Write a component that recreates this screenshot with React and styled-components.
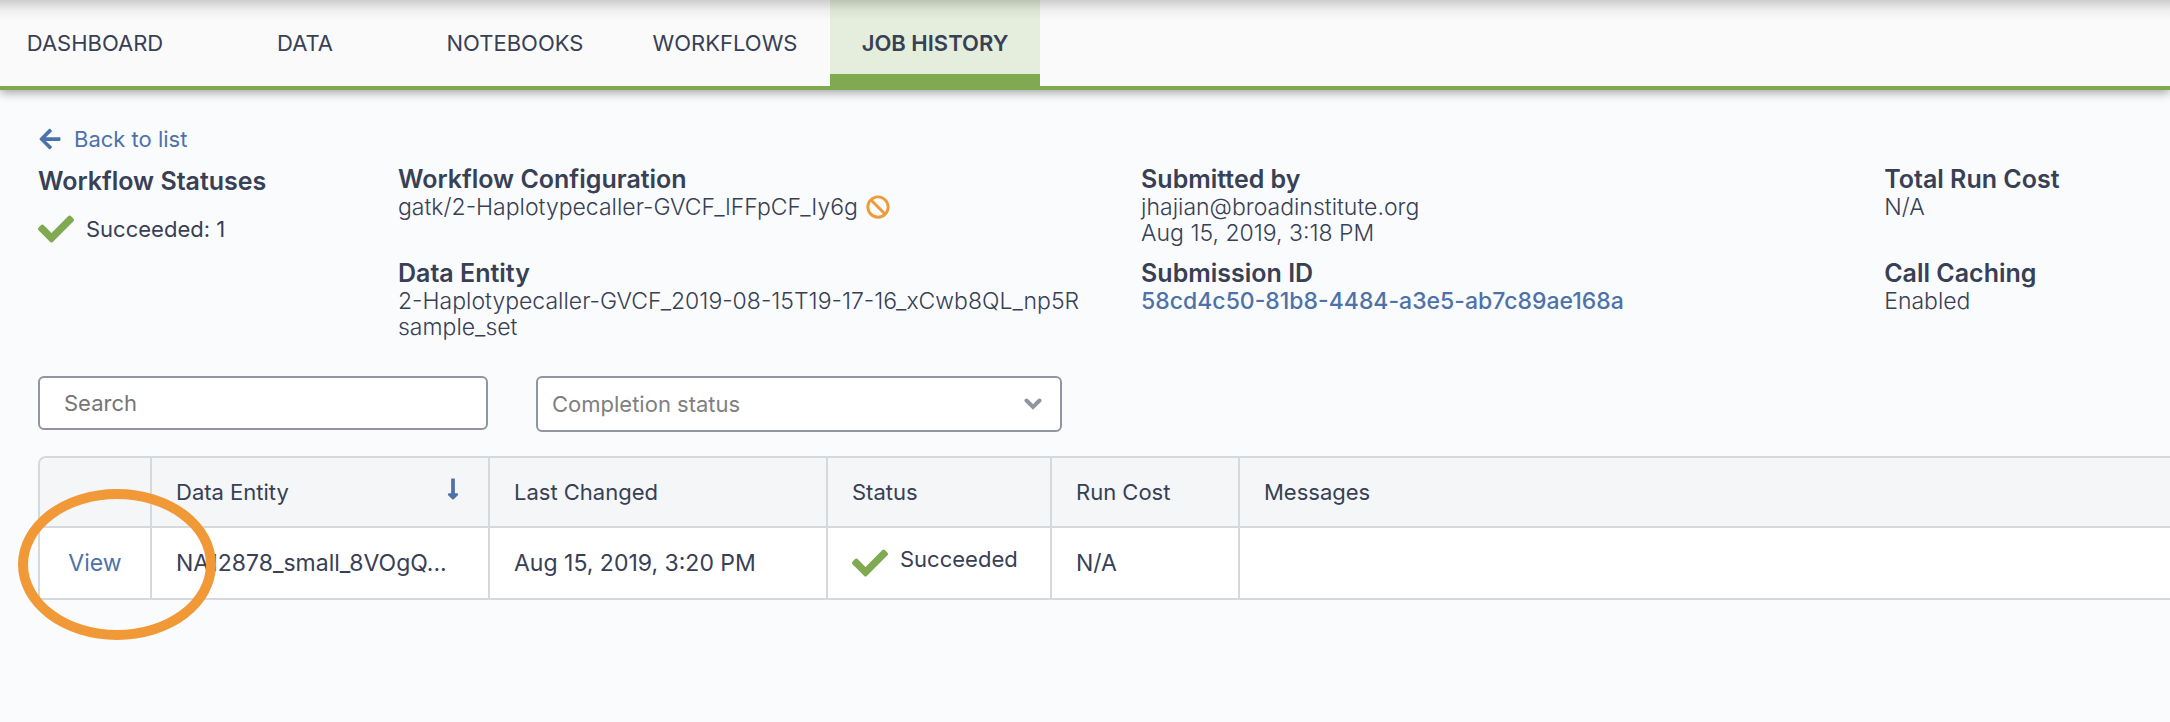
import React from "react";
import styled, { createGlobalStyle } from "styled-components";
import { FaArrowLeft, FaBan, FaCheck, FaLongArrowAltDown } from "react-icons/fa";

const tabs = ["Dashboard", "Data", "Notebooks", "Workflows", "Job History"];

const columns = [
  { label: "", width: 112 },
  { label: "Data Entity", width: 338, sorted: true },
  { label: "Last Changed", width: 338 },
  { label: "Status", width: 224 },
  { label: "Run Cost", width: 188 },
  { label: "Messages" },
];

const workflows = [
  {
    entity: "NA12878_small_8VOgQ...",
    changed: "Aug 15, 2019, 3:20 PM",
    status: "Succeeded",
    cost: "N/A",
    messages: "",
  },
];

const App = () => {
  return (
    <Page>
      <GlobalStyle />
      <TabBar>
        {tabs.map((tab) => (
          <Tab href="#" key={tab} $active={tab === "Job History"}>
            {tab}
          </Tab>
        ))}
      </TabBar>
      <Content>
        <BackLink href="#">
          <FaArrowLeft size={24} />
          Back to list
        </BackLink>
        <Details>
          <Statuses>
            <Heading>Workflow Statuses</Heading>
            <StatusLine>
              <CheckIcon />
              Succeeded: 1
            </StatusLine>
          </Statuses>
          <Section>
            <Heading>Workflow Configuration</Heading>
            <Value>
              gatk/2-Haplotypecaller-GVCF_lFFpCF_Iy6g
              <BanIcon />
            </Value>
          </Section>
          <Section>
            <Heading>Submitted by</Heading>
            <Value>jhajian@broadinstitute.org</Value>
            <Value>Aug 15, 2019, 3:18 PM</Value>
          </Section>
          <Section>
            <Heading>Total Run Cost</Heading>
            <Value>N/A</Value>
          </Section>
          <Section>
            <Heading>Data Entity</Heading>
            <Value>2-Haplotypecaller-GVCF_2019-08-15T19-17-16_xCwb8QL_np5R</Value>
            <Value>sample_set</Value>
          </Section>
          <Section>
            <Heading>Submission ID</Heading>
            <IdLink href="#">58cd4c50-81b8-4484-a3e5-ab7c89ae168a</IdLink>
          </Section>
          <Section>
            <Heading>Call Caching</Heading>
            <Value>Enabled</Value>
          </Section>
        </Details>
        <Filters>
          <SearchInput type="search" placeholder="Search" aria-label="Search" />
          <SelectBox>
            <StatusSelect aria-label="Completion status" defaultValue="">
              <option value="">Completion status</option>
              <option value="succeeded">Succeeded</option>
              <option value="failed">Failed</option>
            </StatusSelect>
            <Chevron viewBox="0 0 18 12" aria-hidden="true">
              <path d="M2.500 2.500 9 9l6.500-6.500" />
            </Chevron>
          </SelectBox>
        </Filters>
        <TableArea>
          <Table>
            <colgroup>
              {columns.map((col) => (
                <Col key={col.label} $width={col.width} />
              ))}
            </colgroup>
            <thead>
              <tr>
                {columns.map((col) => (
                  <HeadCell key={col.label}>
                    <HeadLabel>
                      {col.label}
                      {col.sorted && <SortIcon />}
                    </HeadLabel>
                  </HeadCell>
                ))}
              </tr>
            </thead>
            <tbody>
              {workflows.map((row) => (
                <tr key={row.entity}>
                  <ActionCell>
                    <ViewLink href="#">View</ViewLink>
                  </ActionCell>
                  <Cell>{row.entity}</Cell>
                  <Cell>{row.changed}</Cell>
                  <Cell>
                    <CellStatus>
                      <CheckIcon />
                      <span>{row.status}</span>
                    </CellStatus>
                  </Cell>
                  <Cell>{row.cost}</Cell>
                  <Cell>{row.messages}</Cell>
                </tr>
              ))}
            </tbody>
          </Table>
          <Highlight />
        </TableArea>
      </Content>
    </Page>
  );
};
export default App;

const GlobalStyle = createGlobalStyle`
  * {
    box-sizing: border-box;
  }
  body {
    margin: 0;
    background: #fafbfd;
    color: #374055;
    font-family: Inter, sans-serif;
    font-size: 22px;
    line-height: 26px;
  }
`;

const Page = styled.div`
  min-height: 100vh;
  overflow: hidden;
`;

const TabBar = styled.nav`
  display: flex;
  position: relative;
  height: 90px;
  background: #fafafa;
  border-bottom: 4px solid #80aa51;
  box-shadow: 0 2px 10px rgba(0, 0, 0, 0.4);

  /* shadow cast by the top bar */
  &::before {
    content: "";
    position: absolute;
    inset: 0 0 auto;
    height: 20px;
    background: linear-gradient(rgba(0, 0, 0, 0.18), rgba(0, 0, 0, 0.05) 50%, transparent);
  }
`;

const Tab = styled.a`
  display: flex;
  align-items: center;
  justify-content: center;
  width: 210px;
  padding-top: 12px;
  background: ${(props) => (props.$active ? "#e5eedc" : "none")};
  border-bottom: 12px solid ${(props) => (props.$active ? "#80aa51" : "transparent")};
  color: #374055;
  font-weight: ${(props) => (props.$active ? 600 : 400)};
  text-decoration: none;
  text-transform: uppercase;

  &:first-child {
    margin-left: -10px;
  }
`;

const Content = styled.main`
  padding: 36px 0 0 38px;
`;

const BackLink = styled.a`
  display: flex;
  align-items: center;
  gap: 12px;
  width: fit-content;
  color: #4d72aa;
  text-decoration: none;
`;

const Details = styled.div`
  display: grid;
  grid-template-columns: 360px 13fr 13fr 5fr;
  row-gap: 12px;
  margin-top: 12px;
`;

const Statuses = styled.section`
  grid-row: span 2;
  padding-top: 2px;
`;

const Section = styled.section`
  min-width: 0;
  min-height: 82px;
`;

const Heading = styled.h2`
  margin: 0;
  font-size: 25px;
  line-height: 30px;
  font-weight: 600;
`;

const StatusLine = styled.div`
  display: flex;
  align-items: center;
  gap: 12px;
  margin-top: 20px;
`;

const CheckIcon = styled(FaCheck)`
  flex: none;
  width: 36px;
  height: 36px;
  margin: -5px 0;
  color: #80aa51;
`;

const Value = styled.div`
  display: flex;
  align-items: center;
  font-size: 23px;
  font-weight: 300;
`;

const BanIcon = styled(FaBan)`
  width: 24px;
  height: 24px;
  margin-left: 8px;
  color: #ed9b3b;
`;

const IdLink = styled.a`
  color: #4d72aa;
  font-size: 23px;
  font-weight: 500;
  text-decoration: none;
`;

const Filters = styled.div`
  display: flex;
  align-items: flex-start;
  gap: 48px;
  margin-top: 36px;
`;

const SearchInput = styled.input`
  width: 450px;
  height: 54px;
  padding: 0 24px;
  background: #fff;
  border: 2px solid #8f95a3;
  border-radius: 6px;
  font: inherit;

  &::placeholder {
    color: #757575;
  }
`;

const SelectBox = styled.div`
  position: relative;
  width: 526px;
`;

const StatusSelect = styled.select`
  appearance: none;
  display: block;
  width: 100%;
  height: 56px;
  padding: 0 48px 0 14px;
  background: #fff;
  border: 2px solid #8f95a3;
  border-radius: 6px;
  color: #808080;
  font: inherit;
`;

const Chevron = styled.svg`
  position: absolute;
  right: 20px;
  top: 22px;
  width: 18px;
  height: 12px;
  fill: none;
  stroke: #8f95a3;
  stroke-width: 4;
  stroke-linecap: round;
  pointer-events: none;
`;

const TableArea = styled.div`
  position: relative;
  margin-top: 24px;
`;

const Table = styled.table`
  width: 100%;
  table-layout: fixed;
  border-collapse: separate;
  border-spacing: 0;
  border: 2px solid #d6d9dc;
  border-right: none;
  border-radius: 8px 0 0 0;
`;

const Col = styled.col`
  width: ${(props) => (props.$width ? `${props.$width}px` : "auto")};
`;

const Cell = styled.td`
  height: 70px;
  padding: 0 24px;
  background: #fff;
  border-right: 2px solid #d6d9dc;
  font-size: 23px;
  white-space: nowrap;

  &:last-child {
    border-right: none;
  }
`;

const ActionCell = styled(Cell)`
  padding: 0;
  text-align: center;
`;

const HeadCell = styled(Cell).attrs({ as: "th", scope: "col" })`
  background: #f4f6f8;
  border-bottom: 2px solid #d6d9dc;
  font-size: 22px;
  font-weight: 400;
  text-align: left;

  &:first-child {
    border-radius: 6px 0 0;
  }
`;

const HeadLabel = styled.div`
  display: flex;
  align-items: center;
  justify-content: space-between;
`;

const SortIcon = styled(FaLongArrowAltDown)`
  height: 24px;
  margin-bottom: 6px;
  color: #4d72aa;
`;

const ViewLink = styled.a`
  color: #4d72aa;
  text-decoration: none;
`;

const CellStatus = styled.div`
  display: flex;
  align-items: center;
  gap: 12px;
  font-size: 22px;

  span {
    padding-bottom: 8px;
  }
`;

/* marker ring drawn over the View link */
const Highlight = styled.div`
  position: absolute;
  left: -20px;
  top: 33px;
  width: 198px;
  height: 151px;
  border: 10px solid #f19837;
  border-radius: 50%;
  pointer-events: none;
`;
